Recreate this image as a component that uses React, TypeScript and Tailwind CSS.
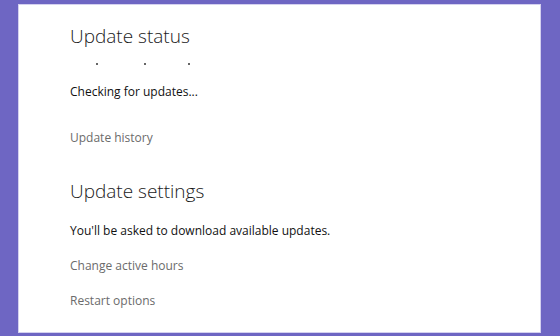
export default function App() {
  return (
    <div className="h-[336px] w-[560px] bg-[#6e66c3] pt-[4px] pl-[18px] pr-[19px] pb-[3px] overflow-hidden" style={{ fontFamily: '"Open Sans", "Noto Sans", sans-serif' }}>
      <div className="h-full bg-white border border-[#d4d1ef] pl-[51px] pt-[17px]">
        {/* Update status */}
        <h2 className="text-[19px] leading-[28px] font-light text-[#1a1a1a]">Update status</h2>
        <div className="flex items-center h-[20px] mt-[4px] pl-[26px]">
          <span className="w-[2px] h-[2px] bg-[#666]" />
          <span className="w-[2px] h-[2px] bg-[#666] ml-[46px]" />
          <span className="w-[2px] h-[2px] bg-[#666] ml-[42px]" />
        </div>
        <p className="mt-[8px] text-[12px] leading-[20px] text-[#111]">Checking for updates...</p>
        <p className="mt-[26px] text-[12px] leading-[20px] text-[#6b6b6b]">Update history</p>

        {/* Update settings */}
        <h2 className="mt-[29px] text-[19px] leading-[28px] font-light text-[#1a1a1a]">Update settings</h2>
        <p className="mt-[16px] text-[12px] leading-[20px] text-[#111]">You'll be asked to download available updates.</p>
        <p className="mt-[15px] text-[12px] leading-[20px] text-[#6b6b6b]">Change active hours</p>
        <p className="mt-[15px] text-[12px] leading-[20px] text-[#6b6b6b]">Restart options</p>
      </div>
    </div>
  );
}
